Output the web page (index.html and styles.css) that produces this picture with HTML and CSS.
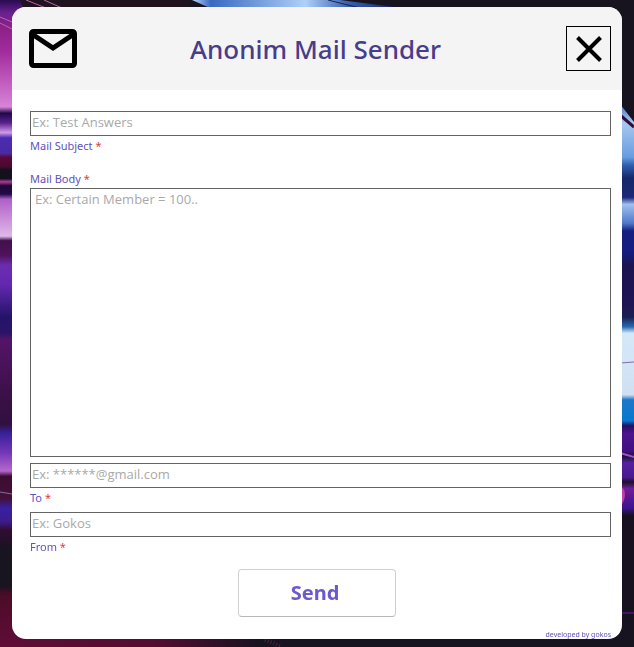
FILE: index.html
```html
<!DOCTYPE html>
<html lang="en">
<head>
<meta charset="utf-8">
<meta name="viewport" content="width=device-width, initial-scale=1">
<title>Anonim Mail Sender</title>
<link rel="stylesheet" href="styles.css">
</head>
<body>
<svg class="wallpaper" viewBox="0 0 634 647" preserveAspectRatio="none" aria-hidden="true">
  <defs>
    <linearGradient id="left" gradientUnits="userSpaceOnUse" x1="0" y1="0" x2="0" y2="647">
      <stop offset="0" stop-color="#2a0b50"/>
      <stop offset=".02" stop-color="#6a2090"/>
      <stop offset=".04" stop-color="#8a2088"/>
      <stop offset=".08" stop-color="#a22c9c"/>
      <stop offset=".165" stop-color="#d884d8"/>
      <stop offset=".175" stop-color="#1c0a48"/>
      <stop offset=".19" stop-color="#5a2090"/>
      <stop offset=".205" stop-color="#d09ae8"/>
      <stop offset=".213" stop-color="#4a2cb4"/>
      <stop offset=".237" stop-color="#4a2aa0"/>
      <stop offset=".243" stop-color="#5c0838"/>
      <stop offset=".258" stop-color="#480830"/>
      <stop offset=".262" stop-color="#14101c"/>
      <stop offset=".276" stop-color="#14101c"/>
      <stop offset=".281" stop-color="#b03898"/>
      <stop offset=".287" stop-color="#200838"/>
      <stop offset=".3" stop-color="#200a48"/>
      <stop offset=".308" stop-color="#b060c8"/>
      <stop offset=".365" stop-color="#e0b8e8"/>
      <stop offset=".372" stop-color="#40104c"/>
      <stop offset=".395" stop-color="#50125c"/>
      <stop offset=".41" stop-color="#6c2cb0"/>
      <stop offset=".44" stop-color="#6228b0"/>
      <stop offset=".49" stop-color="#241468"/>
      <stop offset=".515" stop-color="#2c1468"/>
      <stop offset=".525" stop-color="#541468"/>
      <stop offset=".61" stop-color="#3c1048"/>
      <stop offset=".655" stop-color="#301040"/>
      <stop offset=".67" stop-color="#38209c"/>
      <stop offset=".7" stop-color="#7438b8"/>
      <stop offset=".728" stop-color="#b468cc"/>
      <stop offset=".736" stop-color="#3c0c30"/>
      <stop offset=".77" stop-color="#441038"/>
      <stop offset=".785" stop-color="#3820a0"/>
      <stop offset=".805" stop-color="#3c1c90"/>
      <stop offset=".82" stop-color="#300c30"/>
      <stop offset=".85" stop-color="#181420"/>
      <stop offset=".905" stop-color="#181420"/>
      <stop offset=".92" stop-color="#4c0c28"/>
      <stop offset="1" stop-color="#600c38"/>
    </linearGradient>
    <linearGradient id="right" gradientUnits="userSpaceOnUse" x1="0" y1="0" x2="0" y2="647">
      <stop offset="0" stop-color="#17131f"/>
      <stop offset=".16" stop-color="#17131f"/>
      <stop offset=".165" stop-color="#5880c8"/>
      <stop offset=".19" stop-color="#a8c8f0"/>
      <stop offset=".243" stop-color="#689ce0"/>
      <stop offset=".255" stop-color="#3060b0"/>
      <stop offset=".275" stop-color="#142868"/>
      <stop offset=".305" stop-color="#1c2878"/>
      <stop offset=".316" stop-color="#a0c0f0"/>
      <stop offset=".345" stop-color="#5078c8"/>
      <stop offset=".357" stop-color="#142080"/>
      <stop offset=".39" stop-color="#141c80"/>
      <stop offset=".41" stop-color="#1c1450"/>
      <stop offset=".47" stop-color="#201454"/>
      <stop offset=".49" stop-color="#182050"/>
      <stop offset=".505" stop-color="#2868b0"/>
      <stop offset=".515" stop-color="#d4e8f8"/>
      <stop offset=".61" stop-color="#d0e0f4"/>
      <stop offset=".618" stop-color="#1c78c8"/>
      <stop offset=".65" stop-color="#0878d0"/>
      <stop offset=".658" stop-color="#241060"/>
      <stop offset=".67" stop-color="#4c1490"/>
      <stop offset=".697" stop-color="#401080"/>
      <stop offset=".705" stop-color="#1c1030"/>
      <stop offset=".715" stop-color="#5420a0"/>
      <stop offset=".738" stop-color="#4c1890"/>
      <stop offset=".745" stop-color="#1c1028"/>
      <stop offset=".755" stop-color="#701c98"/>
      <stop offset=".785" stop-color="#3c1490"/>
      <stop offset=".797" stop-color="#18101f"/>
      <stop offset="1" stop-color="#17131f"/>
    </linearGradient>
    <linearGradient id="top" gradientUnits="userSpaceOnUse" x1="190" y1="0" x2="400" y2="0">
      <stop offset="0" stop-color="#c8e0ff"/>
      <stop offset=".1" stop-color="#3868c0"/>
      <stop offset=".55" stop-color="#b0d0f8"/>
      <stop offset=".75" stop-color="#3860b0"/>
      <stop offset="1" stop-color="#182060"/>
    </linearGradient>
    <linearGradient id="bottom" gradientUnits="userSpaceOnUse" x1="0" y1="0" x2="260" y2="0">
      <stop offset="0" stop-color="#600c38"/>
      <stop offset=".6" stop-color="#540c30"/>
      <stop offset="1" stop-color="#17131f"/>
    </linearGradient>
  </defs>
  <rect width="634" height="647" fill="#17131f"/>
  <rect y="630" width="260" height="17" fill="url(#bottom)"/>
  <rect width="24" height="647" fill="url(#left)"/>
  <rect x="610" width="24" height="647" fill="url(#right)"/>
  <path d="M20 0H190V10H24Z" fill="#20121f"/>
  <path d="M0 17 12 22M0 23 12 29M26 0 46 8M44 0 62 8" stroke="#b868a8" fill="none"/>
  <path d="M192 0H340L402 8H210Z" fill="url(#top)"/>
  <path d="M328 0 360 8" stroke="#182050" fill="none"/>
  <path d="M620 104V98H634V122Z" fill="#17131f"/>
  <path d="M620 115 634 127" stroke="#301038" stroke-width="3"/>
  <path d="M620 363 634 362M0 492 12 494" stroke="#8070a0" fill="none"/>
  <path d="M620 487c7 0 6 15 0 19Z" fill="#c040a8"/>
  <path d="M620 453 634 457" stroke="#9850d0" stroke-width="2"/>
  <path d="M620 613H634" stroke="#441468" stroke-width="2"/>
  <path d="M265 640 280 646" stroke="#502040" stroke-width="4" stroke-dasharray="1 2"/>
</svg>
<main class="window">
  <header class="titlebar">
    <svg class="mail-icon" viewBox="0 0 48 40" aria-hidden="true">
      <rect x="2.500" y="2.500" width="43" height="34" rx="2" fill="none" stroke="#000" stroke-width="5"/>
      <path d="M3 5 24 19 45 5" fill="none" stroke="#000" stroke-width="5"/>
    </svg>
    <h1 class="title">Anonim Mail Sender</h1>
    <button class="close" type="button" aria-label="Close">
      <svg class="close-icon" viewBox="0 0 26 26" aria-hidden="true"><path d="M1.500 1.500 24.500 24.500M24.500 1.500 1.500 24.500" stroke="#000" stroke-width="4"/></svg>
    </button>
  </header>
  <form class="form">
    <div class="field subject">
      <input class="input" id="subject" type="text" placeholder="Ex: Test Answers" required>
      <label class="label" for="subject">Mail Subject <span class="required">*</span></label>
    </div>
    <div class="field body">
      <label class="label" for="body">Mail Body <span class="required">*</span></label>
      <textarea class="input textarea" id="body" placeholder="Ex: Certain Member = 100.." required></textarea>
    </div>
    <div class="field to">
      <input class="input" id="to" type="text" placeholder="Ex: ******@gmail.com" required>
      <label class="label" for="to">To <span class="required">*</span></label>
    </div>
    <div class="field">
      <input class="input" id="from" type="text" placeholder="Ex: Gokos" required>
      <label class="label" for="from">From <span class="required">*</span></label>
    </div>
    <div class="actions">
      <button class="send" type="submit">Send</button>
    </div>
  </form>
  <footer class="credit">developed by gokos</footer>
</main>
</body>
</html>
```
FILE: styles.css
```css
* { box-sizing: border-box; }

body {
  margin: 0;
  padding: 7px 12px 8px;
  min-height: 100vh;
  display: flex;
  background: #17131f;
  font-family: "Noto Sans", "Open Sans", sans-serif;
}

.wallpaper {
  position: fixed;
  inset: 0;
  width: 100%;
  height: 100%;
  z-index: -1;
}

.window {
  flex: 1;
  display: flex;
  flex-direction: column;
  overflow: hidden;
  border-radius: 14px;
  background: #fff;
  color: #6051bd;
}

.titlebar {
  display: grid;
  grid-template-columns: 48px 1fr 45px;
  align-items: center;
  height: 83px;
  padding: 0 11px 0 17px;
  background: #f4f4f4;
}

.mail-icon { width: 48px; height: 40px; }

.title {
  margin: 0;
  padding-right: 12px;
  text-align: center;
  font-size: 26px;
  line-height: 36px;
  font-weight: 500;
  color: #483d8b;
}

.close {
  display: grid;
  place-items: center;
  width: 45px;
  height: 45px;
  padding: 0;
  border: 1px solid #000;
  background: transparent;
}

.close-icon { width: 26px; height: 26px; }

.form {
  flex: 1;
  display: flex;
  flex-direction: column;
  padding: 21px 11px 14px 18px;
}

.field { display: flex; flex-direction: column; }
.subject { margin-bottom: 14px; }
.body { flex: 1; margin-bottom: 6px; }
.to { margin-bottom: 4px; }

.input {
  width: 100%;
  height: 25px;
  padding: 0 1px 3px;
  border: 1px solid #646464;
  border-radius: 0;
  background: #fff;
  color: #222;
  font: 13px/20px "Open Sans", "Noto Sans", sans-serif;
}

.input::placeholder { color: #a9a9a9; opacity: 1; }

.textarea {
  flex: 1;
  min-height: 120px;
  padding: 0 4px;
  resize: none;
}

.label { font-size: 11px; line-height: 20px; }
.body .label { line-height: 18px; }
.required { color: #e03c3c; }

.actions {
  display: flex;
  justify-content: center;
  padding: 12px 7px 0 0;
}

.send {
  width: 158px;
  height: 48px;
  padding: 0 4px 0 0;
  border: 1px solid #d0d0d0;
  border-bottom-color: #b8b8b8;
  border-radius: 4px;
  background: #fff;
  color: #6a5acd;
  font: 700 20px/28px "Noto Sans", "Open Sans", sans-serif;
}

.credit {
  padding-right: 11px;
  text-align: right;
  font-size: 7px;
  line-height: 8px;
}
```
